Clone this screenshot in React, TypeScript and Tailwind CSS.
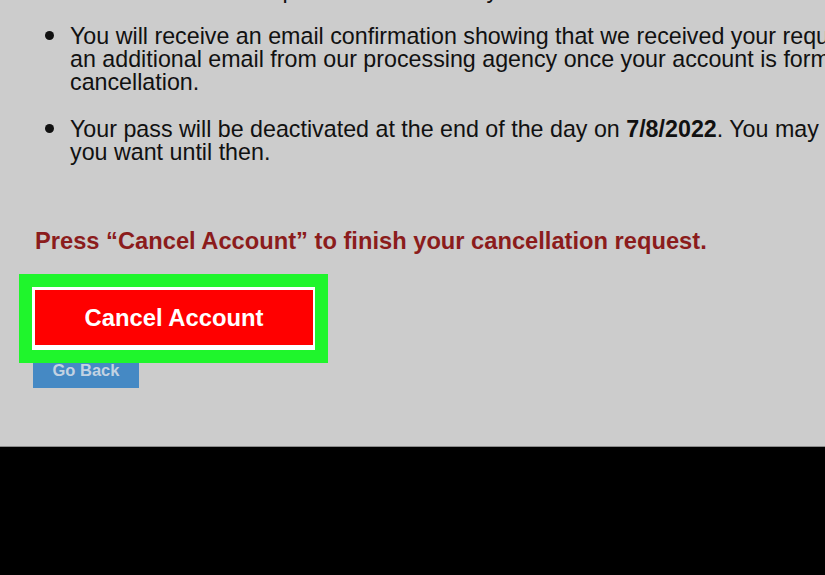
export default function App() {
  return (
    <div className="w-[825px] h-[575px] overflow-hidden bg-black font-['Liberation_Sans',Arial,Helvetica,sans-serif]">
      <div className="h-[447px] bg-[#cccccc] border-b border-[#8c8c8c] overflow-hidden pl-[32px]">
        <ul className="text-[23.25px] leading-[23px] text-[#111111] whitespace-nowrap">
          <li className="flex mt-[-21px]">
            <span className="w-[9px] h-[9px] rounded-full bg-[#111111] mt-[6px] ml-[13px] shrink-0" />
            <span className="ml-[16px]">Your account will be processed in 1-2 days.</span>
          </li>
          <li className="flex mt-[23px]">
            <span className="w-[9px] h-[9px] rounded-full bg-[#111111] mt-[6px] ml-[13px] shrink-0" />
            <span className="ml-[16px]">
              You will receive an email confirmation showing that we received your request. You will also receive
              <br />
              an additional email from our processing agency once your account is formally closed confirming the
              <br />
              cancellation.
            </span>
          </li>
          <li className="flex mt-[24px]">
            <span className="w-[9px] h-[9px] rounded-full bg-[#111111] mt-[6px] ml-[13px] shrink-0" />
            <span className="ml-[16px]">
              Your pass will be deactivated at the end of the day on <b>7/8/2022</b>. You may continue to use your pass as
              <br />
              you want until then.
            </span>
          </li>
        </ul>
        <h2 className="mt-[66px] pl-[3px] text-[23.7px] leading-[23px] font-bold text-[#8b1c1c] whitespace-nowrap">
          Press “Cancel Account” to finish your cancellation request.
        </h2>
        <div className="relative mt-[34px] w-[283px] h-[63px] bg-white pl-[3px] pt-[3px] pr-[2px] pb-[5px]">
          <button className="w-full h-full bg-[#ff0000] text-white font-bold text-[23.8px] leading-none flex items-center justify-center">
            Cancel Account
          </button>
          <div className="absolute -inset-[13px] border-[13px] border-[#1ff52c] z-10 pointer-events-none" />
        </div>
        <button className="mt-[2px] ml-[1px] w-[106px] h-[36px] bg-[#4589c4] text-[#c2d2e2] font-bold text-[16.5px] leading-none flex items-center justify-center">
          Go Back
        </button>
      </div>
    </div>
  );
}
